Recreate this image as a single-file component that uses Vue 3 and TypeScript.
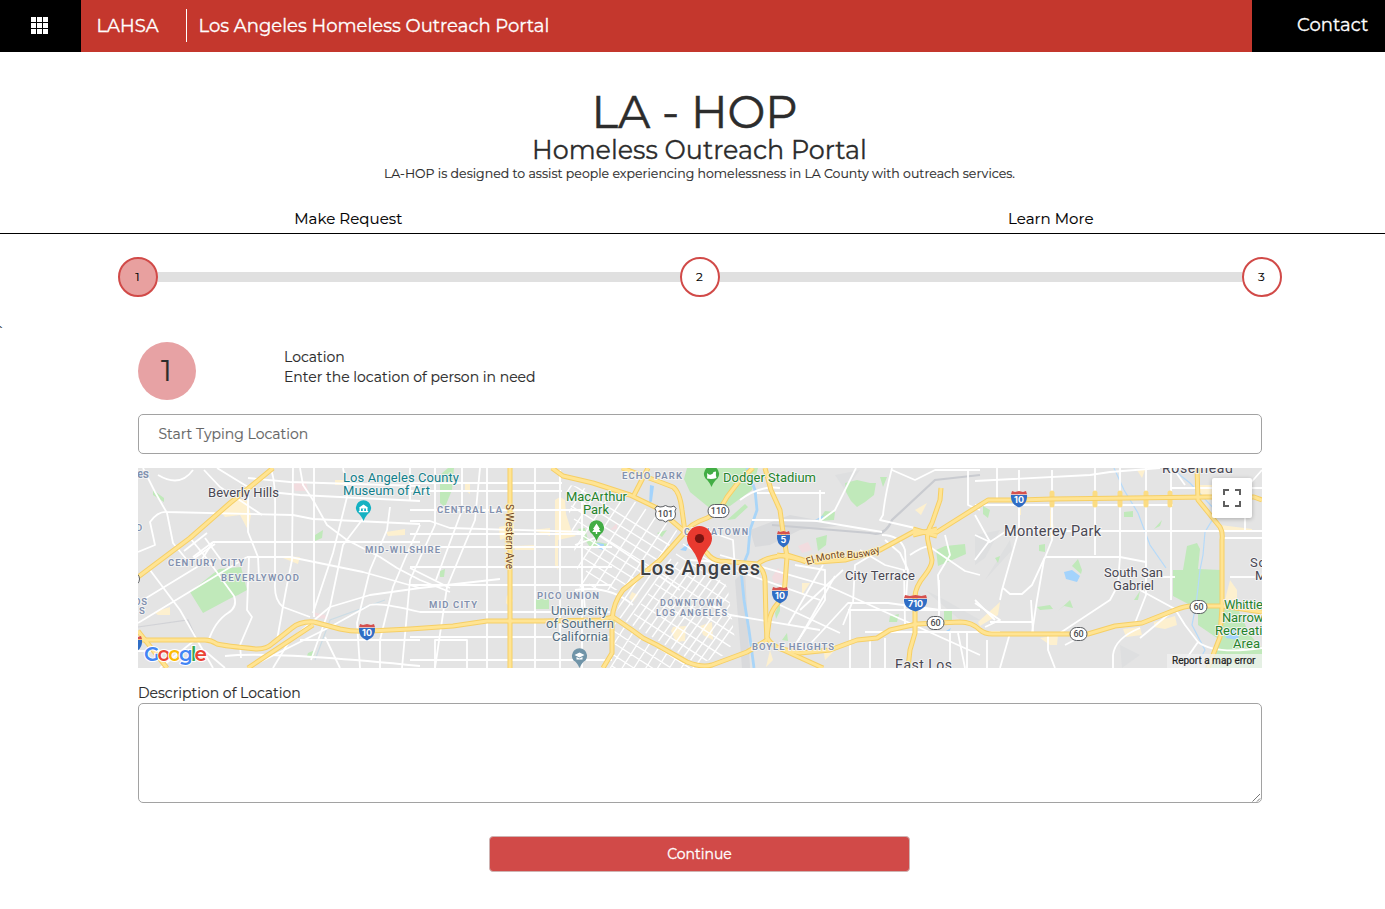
<script setup lang="ts">
interface Label { t: string; x: number; y: number; w: number; s: number; c: string }
interface Shield { t: string; x: number; y: number; w: number }

const steps = [1, 2, 3]

const highways: string[] = [
  'M138 577L150 568L190 538L230 503L250 487L273 468',
  'M138 640H205Q211 640 217 644Q225 646 257 649Q267 649 273 643L292 628Q300 621 314 622L340 629Q353 632 370 631L410 629L453 626L487 621H543L600 620L613 617L632 630L643 638L657 645L687 662Q702 668 712 665L747 652L767 640',
  'M248 668L313 625',
  'M138 631L167 668',
  'M510 468V668',
  'M552 468L563 476L593 483L630 495L657 508L685 532L707 553Q712 560 720 561L758 564Q765 557 787 555L803 560L817 562L845 560L880 550L913 532L937 532L980 505L988 500H1019L1052 499L1208 497L1254 497L1262 500',
  'M603 668L612 653V620Q613 603 623 590L660 560L685 532Q690 524 707 518Q719 513 727 497L740 480L753 468',
  'M633 497L648 468',
  'M622 468L660 482L673 487Q680 492 682 510L685 532',
  'M765 468L771 490L780 510L783 532L787 557L785 583Q785 592 778 603Q770 612 769 622L767 637Q770 644 779 648L823 668',
  'M756 564Q764 569 765 580L766 620L767 640',
  'M777 555Q798 558 806 562',
  'M777 648L800 653L830 650L857 640L877 638L890 630L917 624L960 622Q972 622 980 630Q985 634 992 634H1088L1115 626L1142 623L1175 610Q1185 606 1192 606H1222L1262 612',
  'M941 488L940 500L932 523Q926 533 928 541L932 560Q932 566 925 575Q915 587 915 597V633L910 650L908 668',
  'M913 529L937 536M937 529L913 535',
  'M1197 468L1198 500L1220 527Q1223 532 1222 540V607L1220 637L1208 668',
]

const ramps: string[] = [
  'M1052 493V505M1095 493V505M1120 493V505M1146 493V505M1170 493V505',
]

const streets: string[] = [
  'M143 468L155 492L167 513L173 543L187 560', 'M138 552L155 545L150 522Q158 511 167 512L293 515L313 519L420 524',
  'M158 475Q180 488 193 470', 'M204 470L220 487L262 515', 'M217 468L248 487L248 515L248 532L258 557L259 578',
  'M270 468Q276 478 275 517V583Q274 600 283 607L310 617', 'M293 468L292 560L286 590L277 640',
  'M314 468V617', 'M300 468L303 485L313 500L327 525L347 540L380 557L397 568L420 580L450 592',
  'M248 478L290 482L420 486', 'M270 492L300 495L420 501', 'M213 542H420', 'M193 557L213 542',
  'M247 557H290L363 572L420 588', 'M138 603L197 567L213 542', 'M150 570L180 610L213 668', 'M138 623L247 557',
  'M190 538L208 560L234 596Q238 607 228 613Q215 621 208 642', 'M205 538L221 560', 'M184 551L207 533', 'M193 559L215 544',
  'M249 557L247 610L252 617L240 645L241 658', 'M343 468L348 493L333 553L313 613', 'M368 512L343 545L330 607L311 660',
  'M390 507L387 530L370 570L357 623L360 668', 'M420 525L410 547L393 587L380 640V668',
  'M273 668L290 640L330 607L370 595L420 588L500 579', 'M260 662L330 627L370 605Q380 602 420 612H610',
  'M225 656Q270 651 420 666', 'M138 651H205L225 668', 'M195 640L160 668', 'M325 637L340 668', 'M300 640H420',
  'M480 468L475 520L447 587L435 668', 'M462 468V510L436 580', 'M435 468V525L410 580L402 668', 'M410 468V500',
  'M535 468V668', 'M560 470V668', 'M582 493V668', 'M487 468V668', 'M410 521H430L450 528L585 532',
  'M410 568L450 588', 'M435 668V640L467 640V668', 'M575 545L600 536L680 590', 'M583 585L585 610', 'M575 590Q610 585 633 605',
  'M690 560L760 565', 'M700 598L730 615L820 630', 'M705 530L733 540L735 570L820 600', 'M720 555L828 586L980 655',
  'M757 493H825', 'M740 500Q760 485 780 488', 'M752 520Q795 520 817 521L882 532', 'M820 521L835 510L856 468', 'M820 490V521',
  'M795 565L825 570V600L795 645', 'M780 605L840 633', 'M800 655L848 603H888L940 610H980', 'M843 570L800 610', 'M835 576L798 641',
  'M823 565L788 625', 'M848 610H955', 'M850 610V668', 'M865 632H1000', 'M885 540L900 553L908 570L906 600', 'M875 553L855 565L853 603',
  'M852 603L843 625', 'M882 535Q900 535 905 550L906 570', 'M860 550L885 565L904 570L905 625', 'M885 638V668', 'M870 638V668',
  'M892 468Q885 495 883 515L880 520L915 528', 'M892 470L915 480L935 470H980', 'M910 555Q925 545 930 547L965 571L980 575',
  'M945 535L950 555L938 575L940 610', 'M939 580V620', 'M950 633V668', 'M958 633L965 668', 'M967 632V668', 'M968 470V505L980 510',
  'M975 481L1090 475L1110 472L1160 468', 'M997 468V500', 'M1019 470V530L1002 590L1000 600', 'M1052 470V540L1044 560L1037 600L1032 633',
  'M1095 468V555', 'M1120 468V556L1118 585L1110 600L1060 633', 'M1146 468V575', 'M1171 468V600', 'M975 505H1173',
  'M1050 531H1262', 'M1045 557H1120L1146 562V595L1135 623', 'M975 515L990 542L1008 530H1040', 'M1003 588L1010 594H1022L1032 585L1045 557',
  'M975 560L990 540', 'M975 535L990 542', 'M1031 600L1033 633', 'M990 622H1032', 'M1010 633L1000 668', 'M1048 635L1048 650L1055 668',
  'M1088 633L1065 645', 'M1140 628Q1115 638 1113 655V668', 'M1140 590L1175 609L1185 625L1198 642Q1215 655 1262 648',
  'M1175 609L1140 638', 'M1146 577H1175', 'M1230 577H1262', 'M1222 538L1262 538', 'M975 603L1000 620L985 627', 'M975 600L995 620', 'M1173 468L1185 485',
  'M1222 515L1240 495L1262 470', 'M1171 488H1262', 'M1198 642L1180 668', 'M987 640V668', 'M1245 505V530',
]
for (const y of [483, 491, 510, 534, 547, 567, 585, 637, 660]) streets.push(`M410 ${y}H${y < 500 ? 562 : y < 540 ? 585 : 612}`)

/** A family of parallel streets across a district. */
function grid(x: number, y: number, dx: number, dy: number, count: number, lx: number, ly: number): string {
  let d = ''
  for (let i = 0; i < count; i++) d += `M${x + dx * i} ${y + dy * i}l${lx} ${ly}`
  return d
}
const parkGrid = grid(575, 480, 13, 3, 10, -75, 115) + grid(565, 480, 3, 13, 10, 120, 75)
const downtownGrid = grid(650, 550, 7, 3, 16, -85, 120) + grid(690, 534, -7, 10, 14, 100, 64)
const southGrid = grid(620, 560, 8, 6, 14, -70, 110) + grid(612, 618, 0, 12, 8, 90, 58)

const labels: Label[] = [
  { t: 'es', x: 137, y: 478, w: 12, s: 12, c: 'area' },
  { t: 'Beverly Hills', x: 208, y: 497, w: 71, s: 13, c: 'city' },
  { t: 'Los Angeles County', x: 343, y: 482, w: 116, s: 13, c: 'museum' },
  { t: 'Museum of Art', x: 343, y: 495, w: 87, s: 13, c: 'museum' },
  { t: 'CENTRAL LA', x: 437, y: 513, w: 65, s: 9.5, c: 'area' },
  { t: 'MID-WILSHIRE', x: 365, y: 553, w: 75, s: 9.5, c: 'area' },
  { t: 'CENTURY CITY', x: 168, y: 566, w: 76, s: 9.5, c: 'area' },
  { t: 'BEVERLYWOOD', x: 221, y: 581, w: 78, s: 9.5, c: 'area' },
  { t: 'D', x: 136, y: 531, w: 7, s: 9.5, c: 'area' },
  { t: 'OS', x: 134, y: 605, w: 13, s: 9.5, c: 'area' },
  { t: 'S', x: 139, y: 614, w: 6, s: 9.5, c: 'area' },
  { t: 'MID CITY', x: 429, y: 608, w: 48, s: 9.5, c: 'area' },
  { t: 'PICO UNION', x: 537, y: 599, w: 62, s: 9.5, c: 'area' },
  { t: 'ECHO PARK', x: 622, y: 479, w: 60, s: 9.5, c: 'area' },
  { t: 'MacArthur', x: 566, y: 501, w: 61, s: 13, c: 'park' },
  { t: 'Park', x: 583, y: 514, w: 26, s: 13, c: 'park' },
  { t: 'University', x: 551, y: 615, w: 57, s: 13, c: 'school' },
  { t: 'of Southern', x: 546, y: 628, w: 68, s: 13, c: 'school' },
  { t: 'California', x: 552, y: 641, w: 56, s: 13, c: 'school' },
  { t: 'Dodger Stadium', x: 723, y: 482, w: 93, s: 13, c: 'park' },
  { t: 'CHINATOWN', x: 684, y: 535, w: 64, s: 9, c: 'area' },
  { t: 'DOWNTOWN', x: 660, y: 606, w: 62, s: 9, c: 'area' },
  { t: 'LOS ANGELES', x: 656, y: 616, w: 71, s: 9, c: 'area' },
  { t: 'BOYLE HEIGHTS', x: 752, y: 650, w: 82, s: 9.5, c: 'area' },
  { t: 'City Terrace', x: 845, y: 580, w: 70, s: 13, c: 'city' },
  { t: 'Monterey Park', x: 1004, y: 536, w: 97, s: 14.5, c: 'city' },
  { t: 'South San', x: 1104, y: 577, w: 59, s: 13, c: 'city' },
  { t: 'Gabriel', x: 1113, y: 590, w: 41, s: 13, c: 'city' },
  { t: 'East Los', x: 895, y: 670, w: 57, s: 14, c: 'city' },
  { t: 'Rosemead', x: 1162, y: 473, w: 71, s: 14, c: 'city' },
  { t: 'So', x: 1250, y: 567, w: 16, s: 13, c: 'city' },
  { t: 'M', x: 1255, y: 580, w: 11, s: 13, c: 'city' },
  { t: 'Whittier', x: 1224, y: 609, w: 43, s: 13, c: 'park' },
  { t: 'Narrows', x: 1222, y: 622, w: 48, s: 13, c: 'park' },
  { t: 'Recreation', x: 1215, y: 635, w: 62, s: 13, c: 'park' },
  { t: 'Area', x: 1233, y: 648, w: 27, s: 13, c: 'park' },
  { t: 'Los Angeles', x: 640, y: 575, w: 120, s: 20, c: 'metro' },
]

const interstates: Shield[] = [
  { t: '10', x: 367, y: 632, w: 16 },
  { t: '', x: 134, y: 644, w: 16 },
  { t: '5', x: 783.5, y: 539, w: 13 },
  { t: '10', x: 780, y: 595, w: 16 },
  { t: '710', x: 915.5, y: 603, w: 23 },
  { t: '10', x: 1019, y: 499, w: 16 },
]
const routes: Shield[] = [
  { t: '110', x: 718.5, y: 511, w: 21 },
  { t: '60', x: 935.5, y: 623, w: 17 },
  { t: '60', x: 1078.5, y: 634, w: 17 },
  { t: '60', x: 1198.5, y: 607, w: 17 },
  { t: '', x: 131, y: 579, w: 17 },
]
function shieldPath(s: Shield): string {
  const h = s.w / 2
  return `M${s.x - h} ${s.y - 4}H${s.x + h}Q${s.x + h + 0.8} ${s.y + 5} ${s.x} ${s.y + 8.5}Q${s.x - h - 0.8} ${s.y + 5} ${s.x - h} ${s.y - 4}Z`
}
function crownPath(s: Shield): string {
  const h = s.w / 2
  return `M${s.x - h} ${s.y - 4.8}L${s.x - h + 1} ${s.y - 8}L${s.x - h / 2} ${s.y - 7}L${s.x} ${s.y - 8}L${s.x + h / 2} ${s.y - 7}L${s.x + h - 1} ${s.y - 8}L${s.x + h} ${s.y - 4.8}Z`
}
</script>

<template>
  <div class="page">
    <header class="bar">
      <button class="apps" aria-label="Applications">
        <svg width="17" height="17" viewBox="0 0 17 17">
          <path fill="#fff" d="M0 0h5v5H0zM6 0h5v5H6zM12 0h5v5h-5zM0 6h5v5H0zM6 6h5v5H6zM12 6h5v5h-5zM0 12h5v5H0zM6 12h5v5H6zM12 12h5v5h-5z" />
        </svg>
      </button>
      <div class="brand">
        <span class="org">LAHSA</span>
        <span class="rule"></span>
        <span class="portal">Los Angeles Homeless Outreach Portal</span>
      </div>
      <a class="contact"><span>Contact</span></a>
    </header>

    <main class="main">
      <section class="intro">
        <h1>LA - HOP</h1>
        <h2>Homeless Outreach Portal</h2>
        <p>LA-HOP is designed to assist people experiencing homelessness in LA County with outreach services.</p>
      </section>

      <nav class="tabs">
        <a>Make Request</a>
        <a>Learn More</a>
      </nav>

      <div class="steps">
        <template v-for="n in steps" :key="n">
          <span v-if="n > 1" class="track"></span>
          <span class="step" :class="{ active: n === 1 }">{{ n }}</span>
        </template>
      </div>

      <form class="form">
        <div class="heading">
          <span class="num">1</span>
          <div class="copy">
            <div>Location</div>
            <div>Enter the location of person in need</div>
          </div>
        </div>

        <div class="field"><span>Start Typing Location</span></div>

        <div class="map">
          <svg width="1124" height="200" viewBox="138 468 1124 200">
            <defs>
              <clipPath id="mac"><path d="M565 484L630 498L682 534L655 562L622 590L580 590Z" /></clipPath>
              <clipPath id="dtla"><path d="M690 535L715 560L728 590L735 640L725 655L697 664L615 615L625 592Z" /></clipPath>
              <clipPath id="south"><path d="M614 622L697 668H606L614 650Z" /></clipPath>
            </defs>
            <rect x="138" y="468" width="1124" height="200" fill="#e4e4e4" />

            <g fill="#d9dadc">
              <path d="M750 530L790 515L845 525L800 530L770 545L755 547Z" />
              <path d="M735 580L745 570L750 668H742Z" />
            </g>
            <g fill="#dedfe0">
              <path d="M975 535L1000 530L985 558L975 565ZM985 580L1010 540L1012 550ZM1120 645L1140 655L1122 668ZM835 475L860 470L845 490ZM925 590L945 600L980 620L960 620Z" />
            </g>
            <g fill="#c0e9ba">
              <path d="M687 468H758L752 490L730 506L712 510L690 492L684 479Z" />
              <path d="M190 592L219 569L241 567L247 590L238 595L231 598L203 613Z" />
              <path d="M153 490L164 498V502L153 495ZM315 535L323 530L322 538L315 541ZM308 653L315 650L314 656H307ZM440 475L448 468H454L452 490L445 507L440 503ZM440 571L445 569L444 577H440ZM535 599H549V609H535ZM578 529L585 528L588 540L608 544L606 549L590 547L580 533ZM657 533L667 530L662 537Z" />
              <path d="M845 483L857 480L870 483H876L874 495L865 502L857 507L851 501L846 492ZM880 477H887L883 487ZM818 521L825 511L835 512L834 520ZM816 538L827 535L826 545L818 551ZM727 520L745 504L748 507L735 519ZM936 550L945 546L965 544L966 554L950 561L938 566ZM944 609H952V620H944ZM890 616L899 614L897 622H889ZM775 613L780 602V611L776 619ZM782 640L787 633L788 641Z" />
              <path d="M983 506L990 510L988 518L983 514ZM1124 512L1133 511V517H1124ZM1154 529L1162 520L1160 526ZM1039 545L1045 544V552L1039 551ZM995 558L1000 556L998 563ZM1072 566L1078 559L1082 570L1081 574ZM1037 607L1050 605L1053 609L1040 610ZM1058 611L1070 600L1073 608L1064 606ZM1134 600L1140 591L1138 600Z" />
              <path d="M1173 570H1183L1187 546L1197 543L1200 549L1198 569L1221 570V602L1235 603L1250 635L1262 648V668H1205L1212 654L1220 640L1198 625V608L1190 605L1173 596Z" />
            </g>
            <g fill="#fdf0cf">
              <path d="M219 510L232 498L247 500L251 515L248 530L240 515L225 517ZM154 612L170 607L170 615L158 615ZM386 532L405 529V535L388 536ZM278 556L300 557L298 564ZM335 480H350V485H335ZM465 483H470V494L465 490ZM560 497L565 500L566 514L572 533L576 536L558 540V570L555 565V500ZM499 527L514 524V535L500 540ZM532 530L550 528V536ZM514 546L535 545V550H515ZM507 595L513 600L510 608L506 603Z" />
              <path d="M700 626L712 622L713 640L703 635ZM673 627L686 626L685 641L676 642L671 631ZM632 592L638 595L633 602L629 598ZM802 583L810 583L802 595ZM770 650L773 660L766 667ZM823 648L835 650L825 660ZM915 510L927 503L921 515ZM1200 485H1212V495H1200ZM1154 622L1175 616L1177 625L1165 629L1154 627ZM1123 629L1140 627L1142 635L1126 637ZM1040 638L1058 635L1057 645L1050 645ZM978 622L1000 602L998 615L980 626ZM1137 470L1145 470L1142 478ZM1018 508H1021V515H1018ZM1050 505L1055 535L1050 538ZM1220 525L1252 529V532L1222 532ZM1230 580L1237 590V605L1225 600Z" />
            </g>
            <g fill="#f2dcdf">
              <path d="M293 484L306 481L308 491L295 491ZM313 612L325 615L328 619L317 618ZM798 546L808 542L812 550L802 553ZM772 577L778 568L784 575V583L774 583ZM610 530L617 523V529Z" />
            </g>
            <g fill="#a3d3fc">
              <path d="M597 543L604 544L603 550L598 548ZM650 485L654 486L652 501L649 505ZM815 520L824 515L822 519ZM1064 572L1072 570L1080 576L1077 582L1066 579ZM1225 630L1240 628L1238 640L1226 638ZM946 631L951 628L949 632ZM680 550L690 542L686 551Z" />
            </g>
            <g fill="none" stroke="#b5dafa" stroke-width="1.2">
              <path d="M747 468L755 490L757 510L750 530L748 553L741 570L744 600L749 630L754 668" stroke-width="2.8" stroke="#a9d5f8" />
              <path d="M1114 468L1124 490L1138 513L1150 545L1166 568M1171 468L1190 483L1217 512L1205 532L1203 555L1200 570L1196 605L1192 625L1205 650L1195 668" />
              <path d="M385 600L330 620L315 660" stroke="#cbdce5" />
            </g>
            <g fill="none" stroke="#c9cbd0" stroke-width="1.2">
              <path d="M138 627L188 620L197 640" stroke-opacity=".7" />
              <path d="M772 525L870 533Q885 537 892 520L935 480L980 475" stroke-width="2.2" />
            </g>

            <g fill="none" stroke="#fff" stroke-width="1.8" stroke-linejoin="round">
              <path v-for="(d, i) in streets" :key="i" :d="d" />
              <path :d="parkGrid" clip-path="url(#mac)" stroke-width="1.4" />
              <path :d="downtownGrid" clip-path="url(#dtla)" stroke-width="1.4" />
              <path :d="southGrid" clip-path="url(#south)" stroke-width="1.3" />
            </g>
            <g fill="none" stroke-linejoin="round">
              <path v-for="(d, i) in ramps" :key="i" :d="d" stroke="#fbdc83" stroke-width="5" stroke-linecap="round" />
              <path v-for="(d, i) in highways" :key="'o' + i" :d="d" stroke="#f6cf65" stroke-width="5" />
              <path v-for="(d, i) in highways" :key="'i' + i" :d="d" stroke="#ffe493" stroke-width="3" />
            </g>

            <text v-for="l in labels" :key="l.t + l.x" :class="['label', l.c]" :x="l.x" :y="l.y" :font-size="l.s" :textLength="l.w">{{ l.t }}</text>
            <text class="label road" transform="translate(505.500 504) rotate(90)" x="0" y="0" font-size="10" textLength="65">S Western Ave</text>
            <path id="busway" d="M807 565Q835 556 850 558Q868 558 882 551" fill="none" />
            <text class="label road" font-size="10" textLength="75"><textPath href="#busway">El Monte Busway</textPath></text>

            <g v-for="s in interstates" :key="'s' + s.x">
              <path :d="shieldPath(s)" fill="#2f6dc5" />
              <path :d="crownPath(s)" fill="#d5504e" />
              <text class="shield" :x="s.x" :y="s.y + 4" fill="#fff">{{ s.t }}</text>
            </g>
            <g v-for="s in routes" :key="'r' + s.x">
              <rect :x="s.x - s.w / 2" :y="s.y - 6.5" :width="s.w" height="13" rx="6.5" fill="#fff" stroke="#5b5e62" />
              <text class="route" :x="s.x" :y="s.y + 3.2">{{ s.t }}</text>
            </g>
            <path d="M657 506L660 507Q663 507 665.500 505.500Q668 507 671 507L674 506L676 508.500Q674 511 675.500 514Q676 518 672 520Q668 519.500 665.500 522Q663 519.500 659 520Q655 518 655.500 514Q657 511 655 508.500Z" fill="#fff" stroke="#5b5e62" />
            <text class="route" x="665.500" y="517.200">101</text>

            <g>
              <path d="M363.500 521Q361 515 357.500 512.500A7.600 7.600 0 1 1 369.500 512.500Q366 515 363.500 521Z" fill="#14b1c2" />
              <path d="M358.800 507.700L363.500 504.500L368.200 507.700ZM359.500 507.500H367.500V511.500H359.500ZM358.800 511H368.200V512.300H358.800Z" fill="#fff" />
              <path d="M361 508.500H366V511H361Z" fill="#14b1c2" />
              <path d="M362.800 508.500H364.200V511H362.800Z" fill="#fff" />
              <path d="M596.500 541Q594 535 590.500 532.500A7.600 7.600 0 1 1 602.500 532.500Q599 535 596.500 541Z" fill="#42ad45" />
              <path d="M596.500 523.500L600 529H598.800L600.800 532H597.200V534H595.800V532H592.200L594.200 529H593Z" fill="#fff" />
              <path d="M711.500 487Q709 481 705.500 478.500A7.600 7.600 0 1 1 717.500 478.500Q714 481 711.500 487Z" fill="#42ad45" />
              <path d="M707 473Q709 475.500 711 474.500Q713 474 713.500 472L716 471.500Q715.500 475 716.500 478Q712 479.500 707 478.500Q707.500 476 707 473Z" fill="#fff" />
              <path d="M579.500 668Q577 662 573.500 660.500A7.600 7.600 0 1 1 585.500 660.500Q582 662 579.500 668Z" fill="#7094a8" />
              <path d="M574.500 655L579.500 652.500L584.500 655L579.500 657.500ZM576.500 657L579.500 658.500L582.500 657V659.500H576.500Z" fill="#fff" />
            </g>
            <g>
              <path d="M699.500 567.500Q698.500 558 691.500 549Q687 543.500 687 538.500A12.500 12.500 0 0 1 712 538.500Q712 543.500 707.500 549Q700.500 558 699.500 567.500Z" fill="#e8392f" />
              <circle cx="699.500" cy="538.500" r="4.600" fill="#791411" />
            </g>
            <g class="google">
              <text x="144" y="660.500" textLength="63"><tspan fill="#4285f4">G</tspan><tspan fill="#ea4335">o</tspan><tspan fill="#fbbc05">o</tspan><tspan fill="#4285f4">g</tspan><tspan fill="#34a853">l</tspan><tspan fill="#ea4335">e</tspan></text>
            </g>
            <rect x="1167" y="654" width="95" height="14" fill="#f2f2f2" fill-opacity=".75" />
            <text class="report" x="1172" y="664" textLength="83.500">Report a map error</text>
          </svg>
          <button type="button" class="full" aria-label="Toggle fullscreen">
            <svg width="18" height="18" viewBox="0 0 18 18"><path d="M0 0H6V2H2V6H0ZM12 0H18V6H16V2H12ZM0 12H2V16H6V18H0ZM16 12H18V18H12V16H16Z" fill="#5f5f5f" /></svg>
          </button>
        </div>

        <label class="desc">Description of Location</label>
        <div class="notes">
          <svg width="9" height="9" viewBox="0 0 9 9"><path d="M0.500 8.500L8 1M5 8.500L8 5.500" stroke="#777" stroke-width="1" fill="none" /></svg>
        </div>
        <button type="button" class="go">Continue</button>
      </form>
      <span class="tick">`</span>
    </main>
  </div>
</template>

<style>
body { margin: 0; overflow: hidden; background: #fff; }
</style>

<style scoped>
.page { width: 1385px; height: 909px; overflow: hidden; font-family: Montserrat, Inter, "Liberation Sans", sans-serif; color: #2c2c2c; background: #fff; -webkit-text-stroke: 0.15px currentColor; }
.bar { display: flex; height: 52px; background: #c4372d; color: #fff; -webkit-text-stroke-width: 0.3px; }
.apps { width: 81px; padding: 0 2px 1px 0; border: 0; background: #000; display: flex; align-items: center; justify-content: center; }
.brand { flex: 1; display: flex; align-items: center; font-size: 18px; white-space: nowrap; padding-left: 15.500px; }
.org { width: 89.500px; }
.rule { width: 1px; height: 33px; background: #fff; margin: 0 11.5px 2px 0; }
.portal { letter-spacing: 0.02px; }
.contact { width: 88px; padding-left: 45px; background: #000; display: flex; align-items: center; font-size: 18px; letter-spacing: 0.08px; height: 50px; padding-bottom: 2px; }
.main { width: 1400px; position: relative; }
.intro { padding-top: 35px; text-align: center; white-space: nowrap; }
h1, h2, p { margin: 0; font-weight: 400; }
h1 { font-size: 45px; line-height: 50px; height: 49px; padding-right: 11px; -webkit-text-stroke-width: 0.5px; }
h2 { font-size: 25.4px; line-height: 28px; padding-right: 1px; -webkit-text-stroke-width: 0.3px; }
p { font-size: 12.53px; line-height: 20px; padding-right: 1px; }
.tabs { display: grid; grid-template-columns: 1fr 1fr; width: 1405px; margin-left: -3px; height: 49px; border-bottom: 1px solid #000; text-align: center; font-size: 15px; line-height: 20px; letter-spacing: 0.06px; color: #000; }
.tabs a { padding-top: 25px; }
.steps { display: flex; align-items: center; margin: 23px 118px 0; height: 40px; }
.step { box-sizing: border-box; width: 40px; height: 40px; border: 2px solid #d14a48; border-radius: 50%; font-size: 12px; color: #000; display: flex; align-items: center; justify-content: center; padding: 0 1px 2px 0; }
.step.active { background: #e8a09f; }
.track { flex: 1; height: 10px; background: #e0e0e0; }
.form { width: 1124px; margin: 45px 0 0 138px; display: flex; flex-direction: column; }
.heading { display: flex; height: 72px; font-size: 14px; line-height: 20px; }
.num { width: 58px; height: 58px; border-radius: 50%; background: #e7a2a4; font-size: 30px; line-height: 57px; text-align: center; text-indent: -1px; }
.copy { margin-left: 88px; padding-top: 5px; }
.field { box-sizing: border-box; height: 40px; border: 1px solid #a2a2a2; border-radius: 5px; padding-left: 19.500px; line-height: 38px; font-size: 14px; color: #666; }
.map { position: relative; height: 200px; margin-top: 14px; overflow: hidden; -webkit-text-stroke: 0; }
.map svg { display: block; }
.full { position: absolute; top: 10px; right: 10px; width: 40px; height: 40px; padding: 0; border: 0; border-radius: 2px; background: #fff; display: flex; align-items: center; justify-content: center; box-shadow: 0 1px 4px rgba(0, 0, 0, 0.25); }
.label { font-family: Roboto, sans-serif; paint-order: stroke; stroke: rgba(245, 245, 245, 0.9); stroke-width: 2px; stroke-linejoin: round; }
.city { fill: #494752; }
.museum { fill: #127f8b; }
.park { fill: #24832b; }
.school { fill: #526f82; }
.area { fill: #8190ae; font-weight: 600; }
.metro { fill: #3e4145; font-weight: 500; }
.road { fill: #70451f; stroke: #fff0c0; }
.shield { font: 700 9px Inter, sans-serif; text-anchor: middle; }
.route { font: 500 9px Roboto, sans-serif; text-anchor: middle; fill: #4b4d50; }
.google { font: 600 20px Montserrat, "Open Sans", sans-serif; paint-order: stroke; stroke: #fff; stroke-width: 2px; }
.report { font: 400 10px Roboto, sans-serif; fill: #222; stroke: #222; stroke-width: 0.2px; }
.desc { margin-top: 15px; height: 20px; line-height: 20px; font-size: 14px; }
.notes { box-sizing: border-box; height: 100px; border: 1px solid #a2a2a2; border-radius: 5px; display: flex; align-items: flex-end; justify-content: flex-end; }
.go { align-self: center; width: 421px; height: 36px; margin: 33px 1px 0 0; border: 1px solid #cfb3b2; border-radius: 4px; background: #d14a48; color: #fff; font: inherit; font-size: 14px; -webkit-text-stroke: 0.3px #fff; }
.tick { position: absolute; left: -3px; top: 272px; font-size: 14px; line-height: 16px; }
</style>
